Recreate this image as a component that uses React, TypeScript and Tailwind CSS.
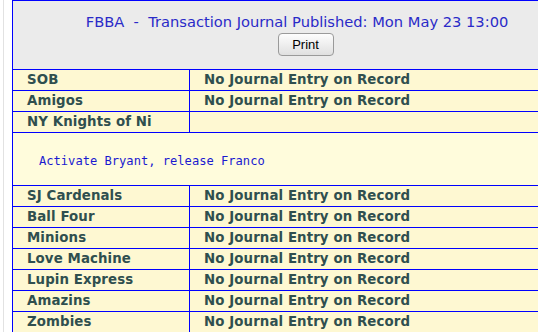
import React from "react";

const rows1 = [
  { team: "SOB", entry: "No Journal Entry on Record" },
  { team: "Amigos", entry: "No Journal Entry on Record" },
  { team: "NY Knights of Ni", entry: "" },
];
const rows2 = [
  "SJ Cardenals",
  "Ball Four",
  "Minions",
  "Love Machine",
  "Lupin Express",
  "Amazins",
  "Zombies",
];

function TeamRow({ team, entry }: { team: string; entry: string }) {
  return (
    <div className="flex h-[21px] border-b border-[#0000ff] bg-[#fef8d2] text-[13.33px] font-bold leading-[20px] tracking-[0.1px] text-[#2f4f4f]">
      <div className="w-[177px] shrink-0 border-r border-[#0000ff] pl-[14px] whitespace-nowrap">{team}</div>
      <div className="flex-1 pl-[14px] whitespace-nowrap">{entry}</div>
    </div>
  );
}

export default function App() {
  return (
    <div
      className="flex h-[332px] w-[538px] overflow-hidden bg-white"
      style={{ fontFamily: '"DejaVu Sans", Verdana, sans-serif' }}
    >
      <div className="w-[3px] shrink-0" />
      <div className="w-px shrink-0 bg-[#e2e2e2]" />
      <div className="w-[8px] shrink-0" />
      <div className="w-[572px] shrink-0 border-l border-t border-[#0000ff]">
        <div className="flex h-[69px] flex-col items-center border-b border-[#0000ff] bg-[#ebebeb]">
          <div className="mt-[11px] ml-[-3px] whitespace-pre text-[14.67px] leading-[19px] text-[#2a2ac8]">
            FBBA  -  Transaction Journal Published: Mon May 23 13:00
          </div>
          <button
            className="mt-[2px] ml-[14px] h-[23px] w-[56px] rounded-[4px] border border-[#9a9a9a] bg-gradient-to-b from-[#fdfdfd] to-[#e0e0e0] text-[13px] leading-[20px] text-black"
            style={{ fontFamily: '"Liberation Sans", Arial, sans-serif' }}
          >
            Print
          </button>
        </div>
        {rows1.map((r) => (
          <TeamRow key={r.team} team={r.team} entry={r.entry} />
        ))}
        <div className="h-[53px] border-b border-[#0000ff] bg-[#fffcdc] pl-[26px] pt-[20px]">
          <div
            className="text-[12.1px] leading-[16px] text-[#1a1ad0] whitespace-pre"
            style={{ fontFamily: '"DejaVu Sans Mono", monospace' }}
          >
            Activate Bryant, release Franco
          </div>
        </div>
        {rows2.map((t) => (
          <TeamRow key={t} team={t} entry="No Journal Entry on Record" />
        ))}
      </div>
    </div>
  );
}
